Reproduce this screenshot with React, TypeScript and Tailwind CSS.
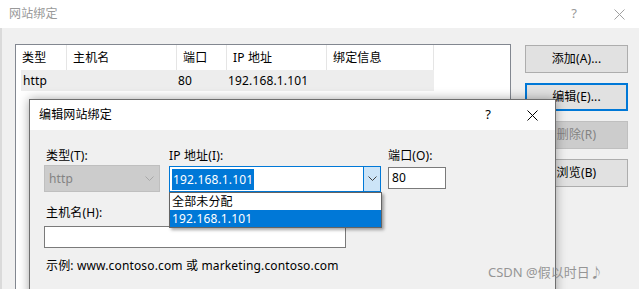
import React from "react";

const font = { fontFamily: '"Noto Sans", "Noto Sans CJK SC", sans-serif' };

function Chevron({ color = "#606060" }: { color?: string }) {
  return (
    <svg width="9" height="6" viewBox="0 0 9 6">
      <polyline points="0.5,0.5 4.5,4.5 8.5,0.5" fill="none" stroke={color} strokeWidth="1" />
    </svg>
  );
}

function CloseX({ color = "#000" }: { color?: string }) {
  return (
    <svg width="11" height="11" viewBox="0 0 11 11">
      <path d="M0.5 0.5 L10.5 10.5 M10.5 0.5 L0.5 10.5" stroke={color} strokeWidth="1" />
    </svg>
  );
}

function Btn({ label, focused, disabled }: { label: string; focused?: boolean; disabled?: boolean }) {
  return (
    <div
      className={
        "h-[28px] w-[103px] flex items-center justify-center text-[12px] " +
        (focused
          ? "border-2 border-[#0078d7] bg-[#e1e1e1] text-black"
          : disabled
          ? "border border-[#bfbfbf] bg-[#cccccc] text-[#838383]"
          : "border border-[#adadad] bg-[#e1e1e1] text-black")
      }
    >
      {label}
    </div>
  );
}

export default function App() {
  return (
    <div className="relative w-[639px] h-[289px] overflow-hidden bg-[#f0f0f0] text-black tracking-[0.15px]" style={font}>
      {/* background dialog */}
      <div className="h-[28px] bg-white flex items-center pl-[9px] pr-[14px] text-[12px] text-[#999999]">
        <span className="flex-1">网站绑定</span>
        <span className="mr-[37px] text-[13px] text-[#999999]">?</span>
        <CloseX color="#a0a0a0" />
      </div>
      <div className="flex pl-[15px] pt-[16px] border-l-[2px] border-[#dadada] h-[261px]">
        <div className="w-[496px] h-[260px] border border-[#828790] bg-white text-[12px] ml-[-2px]">
          <div className="flex h-[25px] items-center">
            <div className="w-[51px] h-full pl-[6px] flex items-center border-r border-[#e5e5e5]">类型</div>
            <div className="w-[110px] h-full pl-[6px] flex items-center border-r border-[#e5e5e5]">主机名</div>
            <div className="w-[50px] h-full pl-[6px] flex items-center border-r border-[#e5e5e5]">端口</div>
            <div className="w-[100px] h-full pl-[6px] flex items-center border-r border-[#e5e5e5]">IP 地址</div>
            <div className="w-[107px] h-full pl-[6px] flex items-center border-r border-[#e5e5e5]">绑定信息</div>
          </div>
          <div className="flex h-[21px] items-center ml-[5px] w-[413px] bg-[#ededed]">
            <div className="w-[156px] pl-[2px]">http</div>
            <div className="w-[50px] pl-[1px]">80</div>
            <div className="pl-[1px]">192.168.1.101</div>
          </div>
        </div>
        <div className="ml-[14px] mt-[1px] flex flex-col gap-[10px]">
          <Btn label="添加(A)..." />
          <Btn label="编辑(E)..." focused />
          <Btn label="删除(R)" disabled />
          <Btn label="浏览(B)" />
        </div>
      </div>

      {/* foreground dialog */}
      <div className="absolute left-[29px] top-[99px] w-[527px] h-[210px] border border-[#6e6e6e] bg-[#f0f0f0] shadow-[0_0_10px_rgba(0,0,0,0.35)]">
        <div className="h-[30px] bg-white flex items-center pl-[9px] pr-[17px] text-[12px]">
          <span className="flex-1">编辑网站绑定</span>
          <span className="mr-[36px] text-[13px]">?</span>
          <CloseX />
        </div>
        <div className="pl-[14px] pt-[18px] text-[12px]">
          <div className="flex">
            <div className="flex flex-col w-[116px]">
              <div className="h-[16px] leading-[16px] pl-[2px]">类型(T):</div>
              <div className="mt-[1px] h-[27px] bg-[#cccccc] border border-[#bfbfbf] flex items-center pl-[4px] pr-[5px] text-[#838383]">
                <span className="flex-1">http</span>
                <Chevron color="#a8a8a8" />
              </div>
            </div>
            <div className="flex flex-col w-[212px] ml-[9px]">
              <div className="h-[16px] leading-[16px]">IP 地址(I):</div>
              <div className="mt-[2px] h-[26px] bg-white border border-[#0078d7] flex items-stretch">
                <div className="flex-1 flex items-center pl-[2px]">
                  <span className="bg-[#0078d7] text-white px-[1px] leading-[21px]">192.168.1.101</span>
                </div>
                <div className="w-[17px] bg-[#cce4f7] border-l border-[#0078d7] flex items-center justify-center">
                  <Chevron color="#404040" />
                </div>
              </div>
            </div>
            <div className="flex flex-col w-[58px] ml-[7px]">
              <div className="h-[16px] leading-[16px]">端口(O):</div>
              <div className="mt-[3px] h-[22px] bg-white border border-[#7a7a7a] flex items-center pl-[3px]">80</div>
            </div>
          </div>
          <div className="mt-[13px] h-[16px] leading-[16px] pl-[2px]">主机名(H):</div>
          <div className="mt-[5px] w-[302px] h-[22px] bg-white border border-[#7a7a7a]"></div>
          <div className="mt-[10px] leading-[16px] pl-[2px]">示例: www.contoso.com 或 marketing.contoso.com</div>
        </div>

        {/* dropdown list */}
        <div className="absolute left-[139px] top-[92px] w-[213px] h-[36px] bg-white border border-[#646464] shadow-[2px_2px_3px_rgba(0,0,0,0.35)] text-[12px]">
          <div className="h-[17px] leading-[17px] pl-[2px]">全部未分配</div>
          <div className="h-[17px] leading-[17px] pl-[2px] bg-[#0078d7] text-white">192.168.1.101</div>
        </div>
      </div>

      {/* watermark */}
      <div className="absolute left-[488px] top-[263px] text-[13px] tracking-normal text-[#8c8c8c] opacity-90">CSDN @假以时日♪</div>
    </div>
  );
}
